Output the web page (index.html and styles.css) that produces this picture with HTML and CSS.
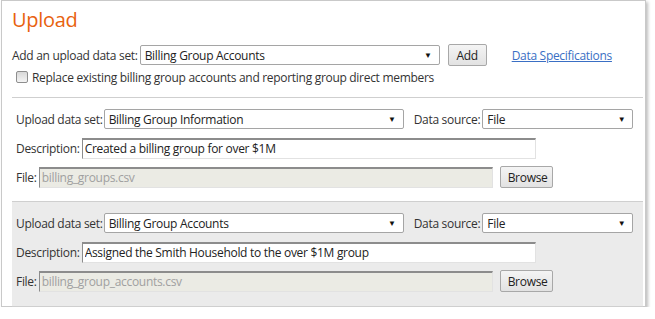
FILE: index.html
```html
<!DOCTYPE html>
<html lang="en">
<head>
    <meta charset="UTF-8">
    <title>Upload</title>
    <link rel="stylesheet" href="styles.css">
</head>
<body>

    <div class="panel">
        <h1 class="title">Upload</h1>

        <div class="add-row">
            <label class="label">Add an upload data set:</label>
            <span class="select add-select">
                <select><option>Billing Group Accounts</option></select>
            </span>
            <button class="btn add-btn">Add</button>
            <a href="#" class="spec-link">Data Specifications</a>
        </div>

        <label class="check-row">
            <input type="checkbox" class="check">
            Replace existing billing group accounts and reporting group direct members
        </label>

        <!-- one block per data set -->
        <div class="dataset">
            <div class="row">
                <label class="label">Upload data set:</label>
                <span class="select set-select">
                    <select><option>Billing Group Information</option></select>
                </span>
                <label class="label source-label">Data source:</label>
                <span class="select source-select">
                    <select><option>File</option></select>
                </span>
            </div>
            <div class="row">
                <label class="label">Description:</label>
                <input type="text" class="text-input" value="Created a billing group for over $1M">
            </div>
            <div class="row">
                <label class="label">File:</label>
                <input type="text" class="text-input file-input" value="billing_groups.csv" disabled>
                <button class="btn browse-btn">Browse</button>
            </div>
        </div>

        <div class="dataset alt">
            <div class="row">
                <label class="label">Upload data set:</label>
                <span class="select set-select">
                    <select><option>Billing Group Accounts</option></select>
                </span>
                <label class="label source-label">Data source:</label>
                <span class="select source-select">
                    <select><option>File</option></select>
                </span>
            </div>
            <div class="row">
                <label class="label">Description:</label>
                <input type="text" class="text-input" value="Assigned the Smith Household to the over $1M group">
            </div>
            <div class="row">
                <label class="label">File:</label>
                <input type="text" class="text-input file-input" value="billing_group_accounts.csv" disabled>
                <button class="btn browse-btn">Browse</button>
            </div>
        </div>
    </div>

</body>
</html>
```

FILE: styles.css
```css
body {
    font-family: 'Open Sans', sans-serif;
    font-size: 12px;
    letter-spacing: -0.3px;
    margin: 0;
    background: #fff;
    color: #333;
}

.panel {
    width: 631px;
    height: 305px;
    margin-left: 1px;
    padding: 0 2px 0 10px;
    border: 1px solid #c9c9c9;
    background: #fff;
    box-shadow: 2px 2px 3px rgba(0,0,0,0.25);
}

.title {
    margin: 0;
    padding-top: 5px;
    font-size: 20px;
    line-height: 28px;
    font-weight: normal;
    color: #e8620f;
}

.add-row {
    display: flex;
    align-items: center;
    height: 22px;
    margin-top: 10px;
}

.label {
    white-space: nowrap;
}

.select {
    position: relative;
    display: inline-block;
    height: 20px;
    margin-left: 2px;
}

    .select select {
        appearance: none;
        width: 100%;
        height: 20px;
        padding: 0 0 0 4px;
        border: 1px solid #a5a5a5;
        border-radius: 2px;
        background: #fff;
        font-family: inherit;
        font-size: 12px;
        letter-spacing: inherit;
        color: #222;
    }

    .select::after {
        content: '▼';
        position: absolute;
        right: 8px;
        top: 4px;
        font-size: 8px;
        color: #111;
        pointer-events: none;
    }

.add-select {
    width: 300px;
}

.btn {
    height: 22px;
    padding: 0 7px;
    border: 1px solid #a8a8a8;
    border-radius: 2px;
    background: linear-gradient(#f4f4f4, #e2e2e2);
    font-family: inherit;
    font-size: 12px;
    letter-spacing: inherit;
    color: #222;
}

.add-btn {
    margin-left: 8px;
    width: 39px;
}

.spec-link {
    margin-left: 25px;
    color: #3a6fc4;
}

.check-row {
    display: flex;
    align-items: center;
    height: 16px;
    margin-top: 3px;
    padding-left: 4px;
}

.check {
    appearance: none;
    width: 12px;
    height: 12px;
    margin: 0 4px 0 0;
    border: 1px solid #8e8e8e;
    border-radius: 2px;
    background: linear-gradient(#d8d8d8, #f4f4f4);
}

.dataset {
    margin-top: 12px;
    padding: 10px 4px 13px;
    border-top: 1px solid #cfcfcf;
    display: flex;
    flex-direction: column;
    gap: 7px;
}

    .dataset.alt {
        margin-top: 0;
        background: #ebebeb;
        border-bottom: 1px solid #cfcfcf;
        padding-bottom: 14px;
    }

.row {
    display: flex;
    align-items: center;
    height: 22px;
}

.set-select {
    width: 300px;
    margin-left: 1px;
}

.source-label {
    margin-left: 10px;
}

.source-select {
    width: 151px;
}

.text-input {
    width: 454px;
    height: 21px;
    box-sizing: border-box;
    margin-left: 2px;
    padding: 0 2px;
    border-style: solid;
    border-width: 2px 1px 1px 1px;
    border-color: #8c8c8c #e2e2e2 #e2e2e2 #8c8c8c;
    background: #fff;
    font-family: inherit;
    font-size: 12px;
    letter-spacing: inherit;
    color: #222;
}

.file-input {
    background: #ebebe4;
    color: #a0a0a0;
}

.browse-btn {
    margin-left: 7px;
    width: 53px;
}
```
